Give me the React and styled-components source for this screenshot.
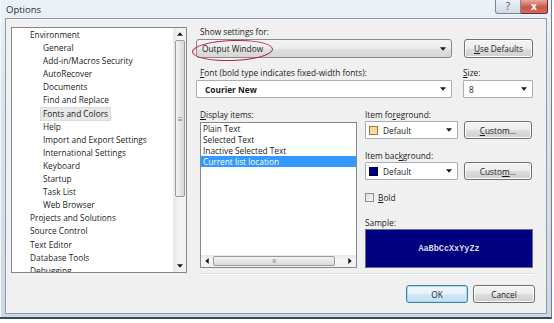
import React from 'react'
import styled, { createGlobalStyle } from 'styled-components'

const GlobalStyle = createGlobalStyle`
  html, body {
    margin: 0;
    padding: 0;
    background: #ffffff;
  }
  body {
    font-family: "Open Sans", "Noto Sans", sans-serif;
    font-size: 8.3px;
    color: #1b1b1b;
  }
`

const treeItems = [
  ['Environment', 0],
  ['General', 1],
  ['Add-in/Macros Security', 1],
  ['AutoRecover', 1],
  ['Documents', 1],
  ['Find and Replace', 1],
  ['Fonts and Colors', 1, true],
  ['Help', 1],
  ['Import and Export Settings', 1],
  ['International Settings', 1],
  ['Keyboard', 1],
  ['Startup', 1],
  ['Task List', 1],
  ['Web Browser', 1],
  ['Projects and Solutions', 0],
  ['Source Control', 0],
  ['Text Editor', 0],
  ['Database Tools', 0],
  ['Debugging', 0],
]

const displayItems = ['Plain Text', 'Selected Text', 'Inactive Selected Text', 'Current list location']

const Arrow = ({ dir = 'down' }) => {
  const pts = {
    down: '0,0 6,0 3,3.5',
    up: '0,3.5 6,3.5 3,0',
    left: '3.5,0 3.5,6 0,3',
    right: '0,0 0,6 3.5,3',
  }[dir]
  const vertical = dir === 'down' || dir === 'up'
  return (
    <svg width={vertical ? 6 : 4} height={vertical ? 4 : 6} viewBox={vertical ? '0 0 6 3.5' : '0 0 3.5 6'}>
      <polygon points={pts} fill="#1a1a1a" />
    </svg>
  )
}

const App = () => {
  return (
    <>
      <GlobalStyle />
      <Window>
        <TitleBar>
          <Title>Options</Title>
          <Caption>
            <HelpButton>?</HelpButton>
            <CloseButton>x</CloseButton>
          </Caption>
        </TitleBar>
        <Client>
          <Tree>
            <TreeList>
              {treeItems.map(([label, level, selected]) => (
                <TreeRow key={label} $level={level}>
                  <TreeText $selected={selected}>{label}</TreeText>
                </TreeRow>
              ))}
            </TreeList>
            <VScroll>
              <ScrollButton><Arrow dir="up" /></ScrollButton>
              <VTrack>
                <VThumb><Grip $vertical>≡</Grip></VThumb>
              </VTrack>
              <ScrollButton><Arrow dir="down" /></ScrollButton>
            </VScroll>
          </Tree>

          <RightPanel>
            <Label $pad>Show settings for:</Label>
            <Row>
              <ComboWrap>
                <Combo $w={256} $h={19} $list>
                  <ComboText>Output Window</ComboText>
                  <Arrow />
                </Combo>
                <Annotation />
              </ComboWrap>
              <Button $w={69} $h={19}><u>U</u>se Defaults</Button>
            </Row>

            <LabelRow>
              <Label $pad><u>F</u>ont (bold type indicates fixed-width fonts):</Label>
              <Label $w={70}><u>S</u>ize:</Label>
            </LabelRow>
            <Row>
              <Combo $w={256}>
                <ComboText $bold $pad={6}>Courier New</ComboText>
                <Arrow />
              </Combo>
              <Combo $w={70}>
                <ComboText $pad={3}>8</ComboText>
                <Arrow />
              </Combo>
            </Row>

            <Lower>
              <Column>
                <Label><u>D</u>isplay items:</Label>
                <ListBox>
                  <ListItems>
                    {displayItems.map((item, i) => (
                      <ListItem key={item} $selected={i === 3}>{item}</ListItem>
                    ))}
                  </ListItems>
                  <HScroll>
                    <ScrollButton $h><Arrow dir="left" /></ScrollButton>
                    <HThumb><Grip>III</Grip></HThumb>
                    <HTrack />
                    <ScrollButton $h><Arrow dir="right" /></ScrollButton>
                  </HScroll>
                </ListBox>
              </Column>

              <Column>
                <Label>Item fo<u>r</u>eground:</Label>
                <ItemRow>
                  <Combo $w={93}>
                    <Swatch $color="#f9d8a2" $edge="#9a7744" />
                    <ComboText $pad={5}>Default</ComboText>
                    <Arrow />
                  </Combo>
                  <Button $w={68}><u>C</u>ustom...</Button>
                </ItemRow>

                <Label $top={10}>Item bac<u>k</u>ground:</Label>
                <ItemRow>
                  <Combo $w={93}>
                    <Swatch $color="#000080" $edge="#000040" />
                    <ComboText $pad={5}>Default</ComboText>
                    <Arrow />
                  </Combo>
                  <Button $w={68}>Custo<u>m</u>...</Button>
                </ItemRow>

                <CheckRow>
                  <CheckBox />
                  <span><u>B</u>old</span>
                </CheckRow>

                <Label $top={12}>Sample:</Label>
                <Sample>AaBbCcXxYyZz</Sample>
              </Column>
            </Lower>

            <Separator />
            <Footer>
              <Button $w={62} $default>OK</Button>
              <Button $w={62}>Cancel</Button>
            </Footer>
          </RightPanel>
        </Client>
      </Window>
    </>
  )
}

const Window = styled.div`
  width: 552px;
  height: 319px;
  box-sizing: border-box;
  padding: 0 4px 0 5px;
  display: flex;
  flex-direction: column;
  background: linear-gradient(180deg, #edf2f7 0%, #dde6ef 25%, #cbd8e6 100%);
  border-right: 1px solid #6f7d8d;
  border-bottom: 2px solid #3c4a5b;
  box-shadow: inset 1px 0 0 #f4f8fc;
`
const TitleBar = styled.div`
  height: 18px;
  display: flex;
  align-items: flex-start;
`
const Title = styled.div`
  margin: 1px 0 0 1px;
  line-height: 18px;
  font-size: 9.5px;
  color: #1e2a36;
`
const Caption = styled.div`
  margin-left: auto;
  margin-right: -1px;
  display: flex;
  height: 14px;
`
const HelpButton = styled.div`
  width: 26px;
  box-sizing: border-box;
  border: 1px solid #7a8797;
  border-top: none;
  border-radius: 0 0 0 3px;
  background: linear-gradient(#edf2f8, #d0dae6);
  color: #4a5866;
  font-size: 10px;
  line-height: 13px;
  text-align: center;
`
const CloseButton = styled.div`
  width: 27px;
  box-sizing: border-box;
  border: 1px solid #6b2a24;
  border-top: none;
  border-left: none;
  border-radius: 0 0 3px 0;
  background: linear-gradient(#e9a89c, #c9564a 55%, #d26d5f);
  color: #ffffff;
  font-weight: 700;
  font-size: 10px;
  line-height: 12px;
  text-align: center;
`
const Client = styled.div`
  height: 296px;
  box-sizing: border-box;
  display: flex;
  align-items: flex-start;
  padding: 8px 0 0 5px;
  background: #f0f0f0;
  border: 1px solid #8e9aa9;
`
const Tree = styled.div`
  width: 176px;
  height: 246px;
  box-sizing: border-box;
  display: flex;
  background: #ffffff;
  border: 1px solid #828790;
`
const TreeList = styled.div`
  flex: 1;
  overflow: hidden;
`
const TreeRow = styled.div`
  height: 13.1px;
  line-height: 13.1px;
  padding-left: ${p => (p.$level ? 30 : 17)}px;
  white-space: nowrap;
`
const TreeText = styled.span`
  display: inline-block;
  padding: 0 2px;
  margin-left: -2px;
  line-height: 12px;
  background: ${p => (p.$selected ? '#e8e8e8' : 'transparent')};
  border: 1px solid ${p => (p.$selected ? '#dcdcdc' : 'transparent')};
`
const VScroll = styled.div`
  width: 12px;
  display: flex;
  flex-direction: column;
  background: linear-gradient(90deg, #e6e6e6, #f5f5f5 40%, #f0f0f0);
  border-left: 1px solid #ededed;
`
const ScrollButton = styled.div`
  ${p => (p.$h ? 'width: 12px;' : 'height: 12px;')}
  flex-shrink: 0;
  display: flex;
  align-items: center;
  justify-content: center;
`
const VTrack = styled.div`
  flex: 1;
  display: flex;
  flex-direction: column;
`
const VThumb = styled.div`
  height: 157px;
  margin: 0 1px;
  box-sizing: border-box;
  border: 1px solid #9b9b9b;
  border-radius: 2px;
  background: linear-gradient(90deg, #f3f3f3, #e6e6e6 50%, #d9d9d9);
  display: flex;
  align-items: center;
  justify-content: center;
`
const Grip = styled.span`
  font-size: ${p => (p.$vertical ? 8 : 6)}px;
  line-height: 1;
  color: #7a7a7a;
  letter-spacing: ${p => (p.$vertical ? 0 : -0.5)}px;
`
const RightPanel = styled.div`
  width: 339px;
  margin: -2px 0 0 9px;
  display: flex;
  flex-direction: column;
`
const Label = styled.div`
  line-height: 13px;
  height: 13px;
  white-space: nowrap;
  padding-left: ${p => (p.$pad ? 4 : 0)}px;
  margin-top: ${p => p.$top || 0}px;
  ${p => (p.$w ? `width: ${p.$w}px;` : '')}
`
const LabelRow = styled.div`
  width: 337px;
  display: flex;
  justify-content: space-between;
  margin-top: 8px;
`
const Row = styled.div`
  width: 337px;
  margin-top: 1px;
  display: flex;
  align-items: center;
  justify-content: space-between;
`
const ComboWrap = styled.div`
  position: relative;
`
const Annotation = styled.div`
  position: absolute;
  left: -4px;
  top: 1px;
  width: 81px;
  height: 21px;
  box-sizing: border-box;
  border: 1.5px solid #b3253c;
  border-radius: 50%;
  transform: rotate(-2deg);
  pointer-events: none;
`
const Combo = styled.div`
  width: ${p => p.$w}px;
  height: ${p => p.$h || 18}px;
  box-sizing: border-box;
  display: flex;
  align-items: center;
  padding: 0 5px 0 2px;
  border: 1px solid ${p => (p.$list ? '#8a8a8a' : '#abadb3')};
  border-radius: ${p => (p.$list ? 3 : 1)}px;
  background: ${p =>
    p.$list
      ? 'linear-gradient(#f4f4f4 0%, #ececec 50%, #e0e0e0 51%, #d6d6d6 100%)'
      : '#ffffff'};
`
const ComboText = styled.span`
  flex: 1;
  padding-left: ${p => (p.$pad != null ? p.$pad : 3)}px;
  font-weight: ${p => (p.$bold ? 700 : 400)};
  white-space: nowrap;
`
const Swatch = styled.span`
  width: 9px;
  height: 9px;
  margin-left: 1px;
  box-sizing: border-box;
  background: ${p => p.$color};
  border: 1px solid ${p => p.$edge};
`
const Button = styled.div`
  width: ${p => p.$w}px;
  height: ${p => p.$h || 18}px;
  box-sizing: border-box;
  display: flex;
  align-items: center;
  justify-content: center;
  border: 1px solid ${p => (p.$default ? '#3c7fb1' : '#707070')};
  border-radius: 3px;
  background: ${p =>
    p.$default
      ? 'linear-gradient(#f2f8fc 0%, #e5f1fa 50%, #d3e7f5 51%, #c6e0f2 100%)'
      : 'linear-gradient(#f4f4f4 0%, #ececec 50%, #dddddd 51%, #d0d0d0 100%)'};
  box-shadow: inset 0 0 0 1px ${p => (p.$default ? '#a9d8f3' : '#fbfbfb')};
  white-space: nowrap;
`
const Lower = styled.div`
  margin: 10px 0 0 4px;
  width: 333px;
  display: grid;
  grid-template-columns: 157px 168px;
  column-gap: 8px;
`
const Column = styled.div`
  display: flex;
  flex-direction: column;
`
const ListBox = styled.div`
  margin-top: 1px;
  height: 146px;
  box-sizing: border-box;
  border: 1px solid #828790;
  background: #ffffff;
  display: flex;
  flex-direction: column;
`
const ListItems = styled.div`
  flex: 1;
`
const ListItem = styled.div`
  height: 11px;
  line-height: 11px;
  padding-left: 2px;
  white-space: nowrap;
  color: ${p => (p.$selected ? '#ffffff' : '#1b1b1b')};
  background: ${p => (p.$selected ? '#3399ff' : 'transparent')};
`
const HScroll = styled.div`
  height: 12px;
  display: flex;
  background: linear-gradient(#e6e6e6, #f5f5f5 40%, #f0f0f0);
`
const HThumb = styled.div`
  width: 122px;
  margin: 1px 0;
  box-sizing: border-box;
  border: 1px solid #9b9b9b;
  border-radius: 2px;
  background: linear-gradient(#f3f3f3, #e6e6e6 50%, #d9d9d9);
  display: flex;
  align-items: center;
  justify-content: center;
`
const HTrack = styled.div`
  flex: 1;
`
const ItemRow = styled.div`
  display: flex;
  justify-content: space-between;
  align-items: center;
  width: 167px;
`
const CheckRow = styled.div`
  margin-top: 11px;
  height: 13px;
  display: flex;
  align-items: center;
  gap: 4px;
`
const CheckBox = styled.span`
  width: 9px;
  height: 9px;
  box-sizing: border-box;
  border: 1px solid #8f8f8f;
  background: linear-gradient(135deg, #dcdcdc, #f6f6f6);
`
const Sample = styled.div`
  height: 39px;
  box-sizing: border-box;
  border: 1px solid #6a6a8a;
  background: #000080;
  color: #dcdce8;
  font-family: "Liberation Mono", "DejaVu Sans Mono", monospace;
  font-size: 8.5px;
  font-weight: 700;
  display: flex;
  align-items: center;
  justify-content: center;
  padding-top: 1px;
`
const Separator = styled.div`
  margin: 5px 0 0 4px;
  width: 333px;
  height: 1px;
  background: #d5dfe5;
  border-bottom: 1px solid #ffffff;
`
const Footer = styled.div`
  margin-top: 10px;
  display: flex;
  justify-content: flex-end;
  gap: 5px;
`

export default App
